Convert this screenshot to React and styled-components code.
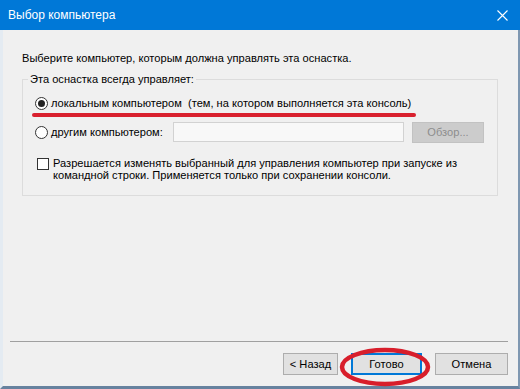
import React from 'react'
import styled, { createGlobalStyle } from 'styled-components'

const GlobalStyle = createGlobalStyle`
  html, body {
    margin: 0;
    padding: 0;
  }
  body {
    width: 520px;
    height: 389px;
    overflow: hidden;
    background: #f0f0f0;
    font-family: "Liberation Sans", Arial, sans-serif;
  }
`

const App = () => {
    return (
        <Window>
            <GlobalStyle />
            <TitleBar>
                <span>Выбор компьютера</span>
                <CloseIcon width="11" height="11" viewBox="0 0 11 11">
                    <path d="M0.5 0.5 L10.5 10.5 M10.5 0.5 L0.5 10.5" stroke="#fff" strokeWidth="1.1" />
                </CloseIcon>
            </TitleBar>
            <Frame>
                <Body>
                    <Intro>Выберите компьютер, которым должна управлять эта оснастка.</Intro>
                    <Group>
                        <Legend>Эта оснастка всегда управляет:</Legend>
                        <Row $top={6} $marked>
                            <Radio $checked />
                            <Label>локальным компьютером  (тем, на котором выполняется эта консоль)</Label>
                        </Row>
                        <Row $top={9}>
                            <Choice>
                                <Radio />
                                <Label>другим компьютером:</Label>
                            </Choice>
                            <TextBox />
                            <BrowseButton>Обзор...</BrowseButton>
                        </Row>
                        <CheckRow>
                            <CheckBox />
                            <CheckText>
                                Разрешается изменять выбранный для управления компьютер при запуске из<br />
                                командной строки. Применяется только при сохранении консоли.
                            </CheckText>
                        </CheckRow>
                    </Group>
                </Body>
                <Footer>
                    <Separator />
                    <Buttons>
                        <Button $w={55}>&lt; Назад</Button>
                        <Marked>
                            <Button $w={71} $gap={13} $default>Готово</Button>
                            <Circle width="100" height="46" viewBox="0 0 100 46">
                                <ellipse cx="50" cy="23" rx="43" ry="17" fill="none" stroke="#d81e2b" strokeWidth="4.5" />
                            </Circle>
                        </Marked>
                        <Button $w={73} $gap={13}>Отмена</Button>
                    </Buttons>
                </Footer>
            </Frame>
        </Window>
    )
}

export default App

const Window = styled.div`
    width: 520px;
    height: 389px;
    display: flex;
    flex-direction: column;
    background: #f0f0f0;
    color: #000;
    font-size: 11.1px;
`

const TitleBar = styled.div`
    flex: none;
    height: 30px;
    background: #0078d7;
    color: #fff;
    display: flex;
    align-items: center;
    justify-content: space-between;
    padding: 0 12px 0 8px;
    font-size: 12px;
`

const CloseIcon = styled.svg`
    display: block;
`

const Frame = styled.div`
    flex: 1;
    display: flex;
    flex-direction: column;
    border-left: 3px solid #e4ebf2;
    border-right: 2px solid #7f97b1;
    border-bottom: 3px solid #67829f;
    min-height: 0;
`

const Body = styled.div`
    flex: 1;
    padding: 21px 20px 0 19px;
`

const Intro = styled.div`
    line-height: 15px;
`

const Group = styled.fieldset`
    margin: 6px 0 0;
    padding: 0 10px 14px 12px;
    border: 1px solid #dcdcdc;
    min-inline-size: 0;
`

const Legend = styled.legend`
    padding: 0 2px;
    margin-left: -7px;
    line-height: 15px;
`

const Row = styled.div`
    position: relative;
    display: flex;
    align-items: center;
    height: 20px;
    margin-top: ${p => p.$top}px;

    ${p => p.$marked && `
        &::after {
            content: "";
            position: absolute;
            left: -3px;
            width: 384px;
            bottom: -4px;
            height: 4px;
            border-radius: 2px;
            background: #d9202e;
        }
    `}
`

const Choice = styled.div`
    display: flex;
    align-items: center;
    width: 138px;
`

const Radio = styled.span`
    flex: none;
    width: 13px;
    height: 13px;
    box-sizing: border-box;
    border: 1px solid #333;
    border-radius: 50%;
    background: #fff;
    display: flex;
    align-items: center;
    justify-content: center;

    &::before {
        content: "";
        width: 7px;
        height: 7px;
        border-radius: 50%;
        background: ${p => p.$checked ? '#222' : 'transparent'};
    }
`

const Label = styled.span`
    margin-left: 3px;
    white-space: pre;
`

const TextBox = styled.div`
    width: 231px;
    height: 20px;
    box-sizing: border-box;
    border: 1px solid #d2d2d2;
    background: #f8f8f8;
`

const BrowseButton = styled.div`
    width: 72px;
    height: 21px;
    box-sizing: border-box;
    margin-left: 8px;
    background: #cccccc;
    border: 1px solid #c2c2c2;
    color: #8c8c8c;
    display: flex;
    align-items: center;
    justify-content: center;
`

const CheckRow = styled.div`
    display: flex;
    align-items: flex-start;
    margin-top: 15px;
    padding-left: 2px;
`

const CheckBox = styled.span`
    flex: none;
    width: 12px;
    height: 12px;
    box-sizing: border-box;
    margin-top: 1px;
    border: 1px solid #333;
    background: #fff;
`

const CheckText = styled.div`
    margin-left: 4px;
    line-height: 12px;
    white-space: nowrap;
`

const Footer = styled.div`
    flex: none;
`

const Separator = styled.div`
    height: 1px;
    margin: 0 10px 0 7px;
    background: #a0a0a0;
`

const Buttons = styled.div`
    display: flex;
    justify-content: flex-end;
    padding: 11px 10px 11px 0;
`

const Button = styled.div`
    width: ${p => p.$w}px;
    height: 22px;
    box-sizing: border-box;
    margin-left: ${p => p.$gap || 0}px;
    background: #e1e1e1;
    border: ${p => p.$default ? '2px solid #0078d7' : '1px solid #adadad'};
    display: flex;
    align-items: center;
    justify-content: center;
`

const Marked = styled.div`
    position: relative;
    display: flex;
`

const Circle = styled.svg`
    position: absolute;
    left: -3px;
    top: -9px;
    pointer-events: none;
`
